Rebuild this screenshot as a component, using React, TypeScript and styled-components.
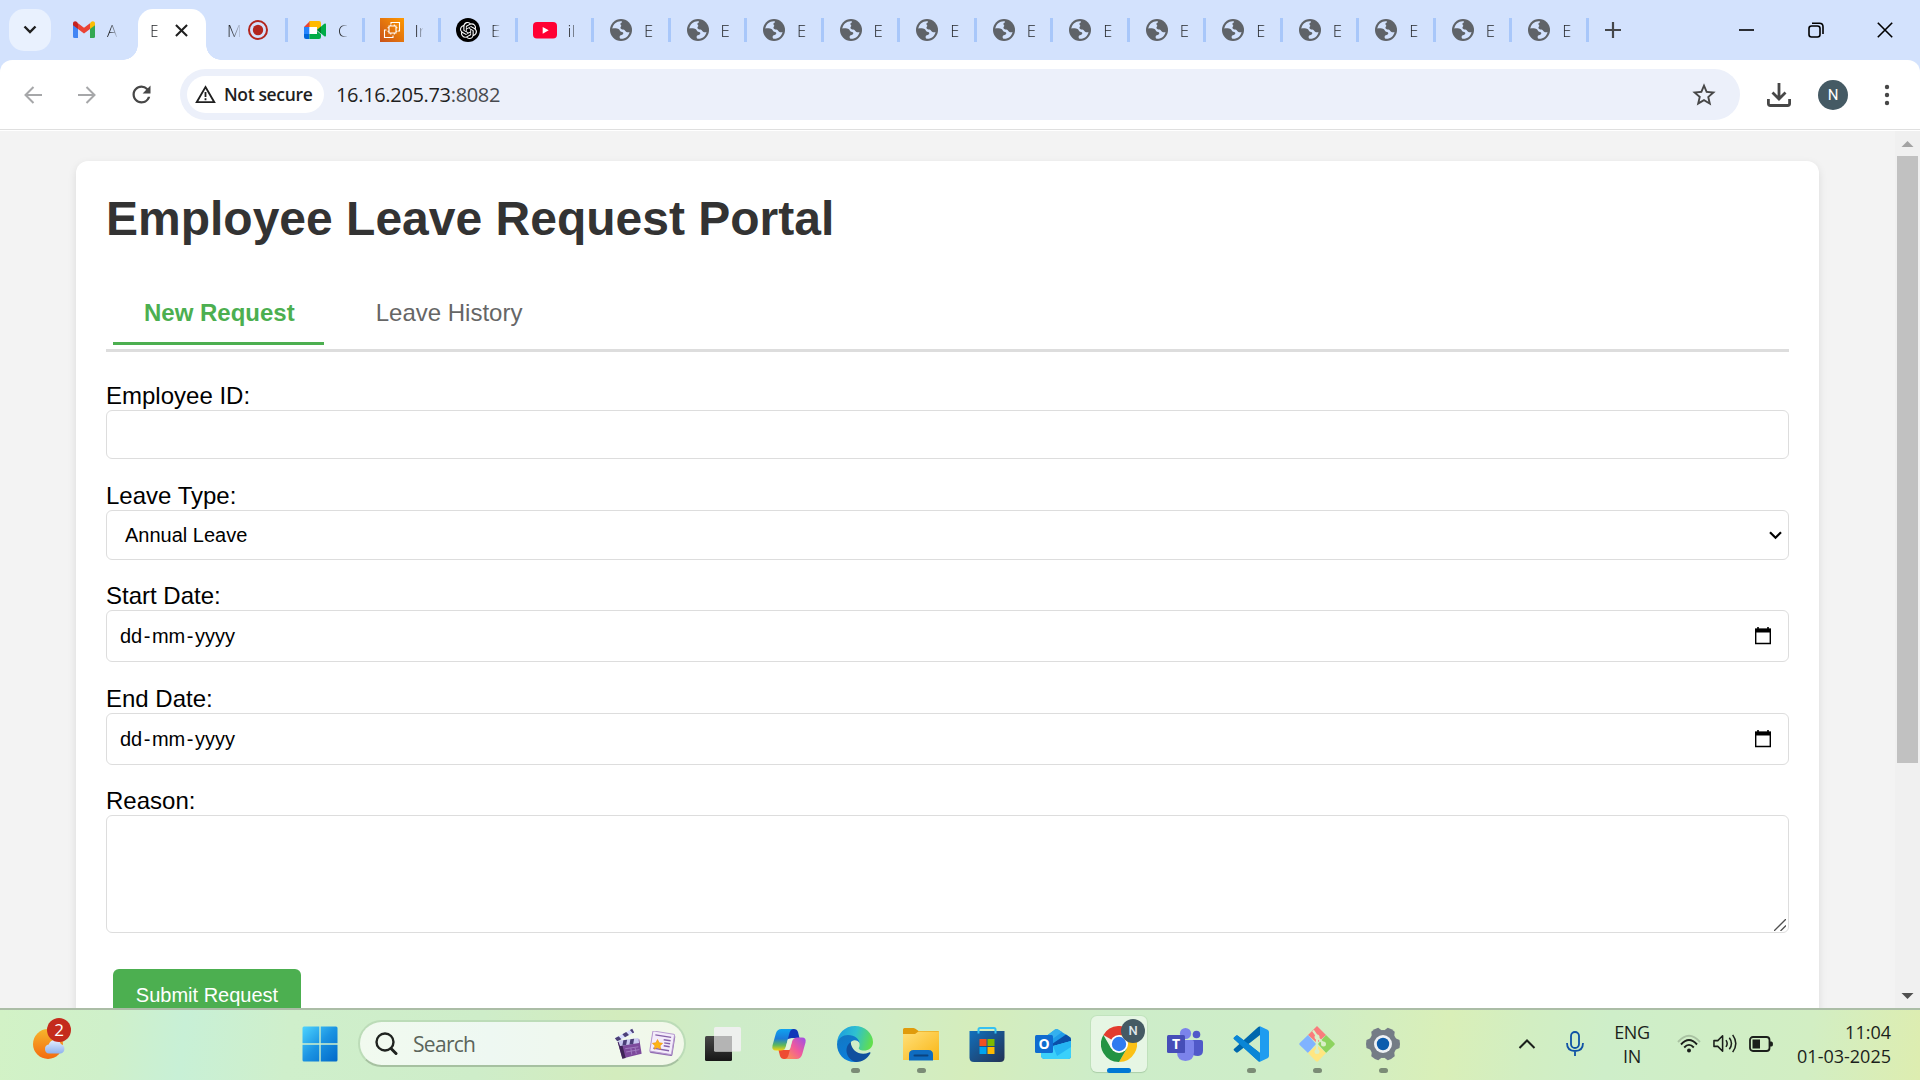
import React from "react";
import styled, { createGlobalStyle } from "styled-components";
import { SiOpenai } from "react-icons/si";
import { MdRefresh, MdStarBorder } from "react-icons/md";

const uiFont = `"Open Sans", "Noto Sans", sans-serif`;
const pageFont = `"Liberation Sans", Arial, sans-serif`;

const Global = createGlobalStyle`
  * { box-sizing: border-box; }
  html, body { margin: 0; padding: 0; overflow: hidden; }
`;

const Desktop = styled.div`
  width: 1920px;
  height: 1080px;
  display: flex;
  flex-direction: column;
  overflow: hidden;
  background: #d3e2fd;
  font-family: ${uiFont};
`;

/* ---------- tab strip ---------- */

const TabStrip = styled.div`
  height: 60px;
  flex: none;
  display: flex;
  align-items: stretch;
  padding-left: 9px;
`;

const TabSearch = styled.div`
  width: 42px;
  height: 42px;
  margin-top: 9px;
  border-radius: 15px;
  background: #e9f1fe;
  display: flex;
  align-items: center;
  justify-content: center;
`;

const Tab = styled.div<{ $w?: number; $pad?: number; $gap?: number; $sep?: boolean }>`
  width: ${(p) => p.$w ?? 76.53}px;
  flex: none;
  display: flex;
  align-items: center;
  gap: ${(p) => p.$gap ?? 11}px;
  padding-left: ${(p) => p.$pad ?? 15}px;
  background: ${(p) =>
    p.$sep === false ? "none" : "linear-gradient(#a8c7fa, #a8c7fa) right 18px / 3px 24px no-repeat"};
`;

const ActiveTab = styled.div`
  position: relative;
  width: 68px;
  flex: none;
  margin-top: 9px;
  height: 51px;
  padding: 0 18px 9px 12px;
  display: flex;
  align-items: center;
  justify-content: space-between;
  background: #fff;
  border-radius: 15px 15px 0 0;
  &::before,
  &::after {
    content: "";
    position: absolute;
    bottom: 0;
    width: 15px;
    height: 15px;
  }
  &::before {
    left: -15px;
    background: radial-gradient(circle at 0 0, transparent 14.5px, #fff 15px);
  }
  &::after {
    right: -15px;
    background: radial-gradient(circle at 100% 0, transparent 14.5px, #fff 15px);
  }
`;

const TabText = styled.span<{ $w?: number; $solid?: boolean }>`
  width: ${(p) => p.$w ?? 9}px;
  overflow: hidden;
  white-space: nowrap;
  font-size: 17px;
  line-height: 24px;
  padding-top: 2px;
  font-weight: 300;
  color: #26282b;
  mask-image: linear-gradient(to right, #000 ${(p) => (p.$solid ? "80%" : "30%")}, rgba(0, 0, 0, 0.15));
`;

const WindowButtons = styled.div`
  margin-left: auto;
  padding-right: 1px;
  display: flex;
  align-items: center;
`;

const WinButton = styled.div`
  width: 69px;
  height: 60px;
  display: flex;
  align-items: center;
  justify-content: center;
`;

const NewTab = styled.div`
  width: 48px;
  display: flex;
  align-items: center;
  justify-content: center;
`;

/* ---------- toolbar ---------- */

const Toolbar = styled.div`
  height: 71px;
  flex: none;
  display: flex;
  align-items: center;
  padding: 0 0 2px 6px;
  background: linear-gradient(#dfdfdf, #dfdfdf) left 69px / 100% 1px no-repeat, #fff;
  border-radius: 12px 12px 0 0;
`;

const NavButton = styled.div<{ $w?: number }>`
  width: ${(p) => p.$w ?? 54}px;
  flex: none;
  display: flex;
  align-items: center;
  justify-content: center;
`;

const Omnibox = styled.div`
  width: 1560px;
  height: 51px;
  margin-left: 12px;
  flex: none;
  border-radius: 26px;
  background: #ecf0fa;
  display: flex;
  align-items: center;
  padding: 0 22px 0 7px;
`;

const SecurityChip = styled.div`
  width: 137px;
  height: 37px;
  border-radius: 19px;
  background: #fff;
  display: flex;
  align-items: center;
  gap: 8px;
  padding: 0 0 1px 8px;
  font-size: 17.5px;
  font-weight: 600;
  letter-spacing: -0.35px;
  white-space: nowrap;
  color: #1f1f1f;
`;

const Url = styled.div`
  flex: 1;
  margin-left: 12px;
  padding-bottom: 1px;
  font-size: 20px;
  letter-spacing: -0.33px;
  color: #1f1f1f;
  span {
    color: #474a4f;
  }
`;

const Avatar = styled.div`
  width: 30px;
  height: 30px;
  border-radius: 50%;
  background: #455a64;
  color: #fff;
  font: 400 15px/30px Roboto, sans-serif;
  text-align: center;
`;

/* ---------- web page ---------- */

const Viewport = styled.div`
  height: 877px;
  flex: none;
  display: flex;
  overflow: hidden;
  background: #f3f3f3;
`;

const PageBody = styled.div`
  flex: 1;
  height: 877px;
  overflow: hidden;
  padding: 30px 76px 0;
  font-family: ${pageFont};
`;

const Card = styled.main`
  height: 1000px;
  padding: 30px;
  background: #fff;
  border-radius: 12px;
  box-shadow: 0 3px 9px rgba(0, 0, 0, 0.1);
`;

const Title = styled.h1`
  margin: 0;
  height: 54px;
  padding-top: 1px;
  font-size: 48px;
  line-height: 54px;
  font-weight: bold;
  color: #333;
  white-space: nowrap;
`;

const Tabs = styled.nav`
  display: flex;
  gap: 21px;
  height: 77px;
  margin-top: 30px;
  padding: 0 7px;
  border-bottom: 3px solid #ddd;
`;

const PageTab = styled.button<{ $active?: boolean }>`
  height: 70px;
  padding: 8px 29px 0 31px;
  border: 0;
  border-bottom: 3px solid ${(p) => (p.$active ? "#4caf50" : "transparent")};
  background: none;
  font: ${(p) => (p.$active ? "bold" : "normal")} 24px/27px ${pageFont};
  color: ${(p) => (p.$active ? "#4caf50" : "#666")};
  white-space: nowrap;
`;

const Form = styled.form`
  padding-top: 31px;
`;

const Field = styled.div<{ $after: number }>`
  display: flex;
  flex-direction: column;
  margin-bottom: ${(p) => p.$after}px;
`;

const Label = styled.label`
  font-size: 24px;
  line-height: 25px;
  height: 27px;
  color: #000;
`;

const Control = styled.div<{ $h: number; $pl?: number; $pr?: number }>`
  position: relative;
  height: ${(p) => p.$h}px;
  border: 1px solid #ddd;
  border-radius: 6px;
  background: #fff;
  display: flex;
  align-items: center;
  justify-content: space-between;
  padding: 0 ${(p) => p.$pr ?? 14}px 0 ${(p) => p.$pl ?? 13}px;
  font-size: 20px;
  color: #000;
`;

const DateParts = styled.span`
  display: flex;
  gap: 1.5px;
`;

const TextInput = styled.input`
  height: 49px;
  padding: 0 14px;
  border: 1px solid #ddd;
  border-radius: 6px;
  font: 20px ${pageFont};
`;

const Grip = styled.svg`
  position: absolute;
  right: 2px;
  bottom: 1px;
`;

const Submit = styled.button`
  display: block;
  margin: 36px 0 0 7px;
  width: 188px;
  height: 53px;
  padding: 0;
  border: 0;
  border-radius: 6px;
  background: #4caf50;
  color: #fff;
  font: 20px/23px ${pageFont};
`;

const ScrollTrack = styled.div`
  width: 25px;
  flex: none;
  display: flex;
  flex-direction: column;
  align-items: center;
  background: #f0f0f0;
`;

const ScrollArrow = styled.svg`
  width: 25px;
  height: 25px;
  flex: none;
`;

const ScrollThumb = styled.div`
  width: 21px;
  height: 607px;
  margin-bottom: auto;
  background: #c1c1c1;
`;

/* ---------- taskbar ---------- */

const Taskbar = styled.footer`
  height: 72px;
  flex: none;
  display: flex;
  align-items: stretch;
  border-top: 2px solid #abbda6;
  background: linear-gradient(
    97deg,
    #d2f2c6 0,
    #cff0ca 110px,
    #c8f0d6 185px,
    #cfefcb 290px,
    #ceedc9 480px,
    #d3ecbd 620px,
    #ceecc9 720px,
    #cfedc8 850px,
    #d5edbc 970px,
    #cdedc9 1100px,
    #ceedc8 1290px,
    #d9efb8 1440px,
    #d2eec2 1520px,
    #ceeec9 1600px,
    #d2eec3 1800px,
    #deedaf 1920px
  );
`;

const WeatherSlot = styled.div`
  position: relative;
  width: 287px;
  flex: none;
  padding: 19px 0 0 33px;
`;

const Badge = styled.span`
  position: absolute;
  left: 47px;
  top: 8px;
  width: 24px;
  height: 24px;
  border-radius: 50%;
  background: #c42b1c;
  color: #fff;
  font-size: 17px;
  line-height: 24px;
  text-align: center;
`;

const AppSlot = styled.div`
  position: relative;
  width: 66px;
  flex: none;
  padding-bottom: 2px;
  display: flex;
  align-items: center;
  justify-content: center;
`;

const AppTile = styled.div<{ $active?: boolean }>`
  position: relative;
  width: 56px;
  height: 56px;
  display: flex;
  align-items: center;
  justify-content: center;
  border-radius: 6px;
  background: ${(p) => (p.$active ? "rgba(255,255,255,.5)" : "none")};
  box-shadow: ${(p) => (p.$active ? "0 0 0 1px rgba(160,200,160,.25), 0 1px 1px rgba(90,130,90,.25)" : "none")};
`;

const RunMark = styled.i<{ $active?: boolean }>`
  position: absolute;
  bottom: -1px;
  width: ${(p) => (p.$active ? 24 : 9)}px;
  height: 5px;
  border-radius: 3px;
  background: ${(p) => (p.$active ? "#0078d4" : "#7b8c76")};
`;

const ProfileBadge = styled.span`
  position: absolute;
  right: 2px;
  top: 3px;
  width: 24px;
  height: 24px;
  border-radius: 50%;
  background: #455a64;
  color: #dfe6ea;
  font: 500 13px/24px Roboto, sans-serif;
  text-align: center;
`;

const SearchBox = styled.div`
  width: 328px;
  height: 47px;
  flex: none;
  margin: 10px 4px 0 5px;
  border: 2px solid #bcdcb8;
  border-bottom-color: #a6c1a1;
  border-radius: 24px;
  background: linear-gradient(90deg, #f1faef, #eef8f2 40%, #f1f8e9);
  display: flex;
  align-items: center;
  padding: 0 8px 0 15px;
`;

const SearchText = styled.span`
  flex: 1;
  margin-left: 15px;
  font-size: 21px;
  letter-spacing: -0.7px;
  color: #5b655b;
`;

const Highlights = styled.div`
  display: flex;
  align-items: center;
  gap: 4px;
`;

const Tray = styled.div`
  margin-left: auto;
  padding: 0 29px 3px 0;
  display: flex;
  align-items: center;
  font-size: 18px;
  line-height: 24px;
  letter-spacing: -0.35px;
  color: #1b1f1b;
`;

const TrayText = styled.div<{ $w: number; $align: string; $mr?: number; $ls?: number }>`
  width: ${(p) => p.$w}px;
  margin-right: ${(p) => p.$mr ?? 0}px;
  text-align: ${(p) => p.$align};
  letter-spacing: ${(p) => p.$ls ?? -0.35}px;
  white-space: nowrap;
`;

const TrayIcon = styled.div<{ $w: number; $mr: number }>`
  width: ${(p) => p.$w}px;
  margin-right: ${(p) => p.$mr}px;
  display: flex;
  justify-content: center;
`;

/* ---------- drawings ---------- */

const Globe = () => (
  <svg width="24" height="24" viewBox="0 0 24 24">
    <circle cx="12" cy="12" r="11" fill="#5f6368" />
    <path
      d="M12.6 3.3C8 2.8 4.2 5.8 3.3 10.6c1.8-.5 4.6-.6 6.6.7 1.2.9.9 2.5 3 2.8 1.6.3 1.9 1.5.7 2.3-1 .7-2.9.7-3 2.3-.1.9.2 1.6.9 2 4.4.5 8.2-2.3 9-6.8-1.4.9-3.3.4-4.2-1-.7-1.2-1.9-1.6-3.1-1.5-1.3 0-2.2-1.1-1.6-2.3.5-.9 1.200-1.100.4-1.800-.6-.6-.8-1.600-.2-2.200.7-.7 1.300-.6 1.300-1.200z"
      fill="#d3e2fd"
    />
  </svg>
);

const Gmail = () => (
  <svg width="24" height="24" viewBox="0 0 24 24">
    <path d="M1 20V6l5 3.8V20H2.500Q1 20 1 18.500z" fill="#4285f4" />
    <path d="M18 20V9.800L23 6v12.500q0 1.500-1.500 1.500z" fill="#34a853" />
    <path d="M18 5.200v5.900l5-3.800V5.500c0-2-2.200-2.900-3.700-1.700z" fill="#fbbc04" />
    <path d="M6 11.100V5.200l6 4.500 6-4.500v5.900l-6 4.500z" fill="#ea4335" />
    <path d="M1 5.500v1.800l5 3.800V5.200L4.700 3.800C3.200 2.600 1 3.500 1 5.500z" fill="#c5221f" />
  </svg>
);

const Meet = () => (
  <svg width="24" height="24" viewBox="0 0 24 24">
    <path d="M1 9l6-6v6z" fill="#ea4335" />
    <path d="M1 9h5.500v7H1z" fill="#2684fc" />
    <path d="M1 16h5.500v5H3q-2 0-2-2z" fill="#0066da" />
    <path d="M6.500 9H14v7H6.500z" fill="#fff" />
    <path d="M6.500 16H14v-3l4 3.500V19q0 2-2 2H6.500z" fill="#00ac47" />
    <path d="M6.500 3H16q2 0 2 2v4l-4 3V9H6.500z" fill="#ffba00" />
    <path d="M14 12l7.300-6.300Q23 5 23 6.500v11q0 1.500-1.700.7L14 12z" fill="#00ac47" />
    <path d="M14 12l4-3.500v7z" fill="#00832d" />
  </svg>
);

const Aws = () => (
  <svg width="24" height="24" viewBox="0 0 24 24">
    <defs>
      <linearGradient id="aws" x1="0" y1="1" x2="1" y2="0">
        <stop offset="0" stopColor="#c8511b" />
        <stop offset="1" stopColor="#ff9900" />
      </linearGradient>
    </defs>
    <path d="M0 0h24v24H0z" fill="url(#aws)" />
    <g fill="none" stroke="#fff" strokeWidth="1.100">
      <path d="M9 8h7v7H9z" />
      <path d="M10.800 6.500V8m3.500-1.500V8m-3.500 7v1.500m3.500-1.500v1.500M7.500 9.800H9m-1.500 3.400H9m7-3.400h1.500M16 13.200h1.500" />
      <path d="M11 6V4.500h8.500V13H18M6.500 12H4.500v7.500H13V17.500" />
    </g>
  </svg>
);

const OpenAiTile = styled.div`
  width: 24px;
  height: 24px;
  border-radius: 50%;
  background: #000;
  color: #fff;
  display: flex;
  align-items: center;
  justify-content: center;
`;

const YouTube = () => (
  <svg width="24" height="24" viewBox="0 0 24 24">
    <rect x="0" y="4" width="24" height="16.500" rx="4" fill="#ff0033" />
    <path d="M9.700 8.900l6 3.400-6 3.400z" fill="#fff" />
  </svg>
);

const Windows = () => (
  <svg width="36" height="36" viewBox="0 0 36 36">
    <defs>
      <linearGradient id="win" x1="0" y1="0" x2="36" y2="36" gradientUnits="userSpaceOnUse">
        <stop offset="0" stopColor="#4fd5ff" />
        <stop offset=".5" stopColor="#1b93e2" />
        <stop offset="1" stopColor="#0067c8" />
      </linearGradient>
    </defs>
    <path
      d="M2 .5h15.300v16.800H.500V2Q.500.500 2 .500zM18.700.500H34q1.500 0 1.500 1.500v15.300H18.700zM.500 18.700h16.800v16.800H2Q.500 35.500.500 34zM18.700 18.700h16.800V34q0 1.500-1.500 1.500H18.700z"
      fill="url(#win)"
    />
  </svg>
);

const Weather = () => (
  <svg width="34" height="32" viewBox="0 0 34 32">
    <defs>
      <linearGradient id="sun" x1="0" y1="0" x2="0" y2="1">
        <stop offset="0" stopColor="#f7b52c" />
        <stop offset="1" stopColor="#f36a10" />
      </linearGradient>
      <linearGradient id="cloud" x1="0" y1="0" x2="0" y2="1">
        <stop offset="0" stopColor="#e3efff" />
        <stop offset="1" stopColor="#8fb2ee" />
      </linearGradient>
    </defs>
    <circle cx="15" cy="15" r="15" fill="url(#sun)" />
    <path d="M16 24.500a4.500 4.500 0 01-.3-8.900 6.500 6.500 0 0112.200-.6A5 5 0 0128 24.500z" fill="url(#cloud)" />
  </svg>
);

const Clapper = () => (
  <svg width="31" height="34" viewBox="0 0 33 34">
    <path d="M5 15l23-3 2.500 15.500L10 32.500z" fill="#7d4a9c" />
    <path d="M5 15l4-.5 4.500 17.300-3.500.9z" fill="#3f2457" />
    <path d="M5.500 13.500L27 10.500l.8 5.500L7.500 19z" fill="#c9c8f0" />
    <path d="M11 13l4-.6-1 5.700-4 .6zM18.500 12l4-.6-1 5.500-4 .6z" fill="#4b3f78" />
    <path d="M2 11L20.500.800l2 4L4.500 14z" fill="#d8dcff" />
    <path d="M2 11l4-2.200L9 12l-4.500 2.200zM10 6.500L14 4.300l3 3.200-4.200 2.200zM18 2.200L20.500.8l2 4-1.500.7z" fill="#4b3f78" />
    <path d="M13 22l14-2M14 25.500l14-2.500M19 21.500l1 7M23.500 21l1.300 6.500" stroke="#a582c4" strokeWidth=".9" />
  </svg>
);

const News = () => (
  <svg width="28" height="26" viewBox="0 0 28 26">
    <g transform="rotate(9 14 13)">
      <rect x="3" y="2.500" width="23" height="21" rx="1.500" fill="#8f6bb0" />
      <rect x="3" y="1.500" width="22" height="20.500" rx="1" fill="#f3ecfa" stroke="#b79ad0" />
      <path d="M6 5h16M15 8.500h7M16 11.500h6M16 14.500h6M6 18.500h16" stroke="#8561a8" strokeWidth="1.400" />
    </g>
    <path d="M9.500 8.500l1.600 3.200 3.500.6-2.500 2.500.6 3.500-3.200-1.700-3.200 1.700.6-3.500-2.500-2.500 3.500-.6z" fill="#fdb515" stroke="#ef8e12" strokeWidth=".6" />
  </svg>
);

const TaskView = () => (
  <svg width="36" height="36" viewBox="0 0 36 36">
    <defs>
      <linearGradient id="tvd" x1="0" y1="0" x2="0" y2="1">
        <stop offset="0" stopColor="#474747" />
        <stop offset="1" stopColor="#171717" />
      </linearGradient>
    </defs>
    <rect x="0" y="10" width="27" height="25" rx="1.500" fill="url(#tvd)" />
    <rect x="9" y="1" width="27" height="24.500" rx="1.500" fill="#eef0ee" />
    <path d="M9 10h18v15.500H10.500Q9 25.500 9 24z" fill="#b4b4b4" />
  </svg>
);

const Copilot = () => (
  <svg width="36" height="36" viewBox="0 0 36 36">
    <defs>
      <linearGradient id="cpa" x1="0" y1="0" x2="0" y2="1">
        <stop offset="0" stopColor="#0fa3f0" />
        <stop offset=".45" stopColor="#1b7bd8" />
        <stop offset=".75" stopColor="#5cb85c" />
        <stop offset="1" stopColor="#f4d411" />
      </linearGradient>
      <linearGradient id="cpb" x1="1" y1="0" x2="0" y2="1">
        <stop offset="0" stopColor="#9b4fe8" />
        <stop offset=".5" stopColor="#f05a9c" />
        <stop offset="1" stopColor="#ff9a4a" />
      </linearGradient>
    </defs>
    <path d="M10 3h13q3 0 4 3l1.500 6h-8l-7 2z" fill="#1238b8" />
    <path d="M26 33H13q-3 0-4-3l-1.500-6h8l7-2z" fill="#ee4d33" />
    <path d="M10.500 3H22q-2.500.5-3.300 3.300L15 20q-1 4.500-5.500 4.500H5q-4.500 0-3.500-5L4.700 8Q6 3 10.500 3z" fill="url(#cpa)" />
    <path d="M25.500 33H14q2.500-.5 3.300-3.300L21 16q1-4.500 5.500-4.500H31q4.500 0 3.500 5L31.300 28Q30 33 25.500 33z" fill="url(#cpb)" />
    <path d="M17 13h4.500l-3 11h-4.500z" fill="#e5f5dc" />
  </svg>
);

const Edge = () => (
  <svg width="36" height="36" viewBox="0 0 36 36">
    <defs>
      <linearGradient id="eda" x1="0" y1=".3" x2="1" y2=".5">
        <stop offset="0" stopColor="#1b9de0" />
        <stop offset=".5" stopColor="#2fc0d0" />
        <stop offset="1" stopColor="#62df4c" />
      </linearGradient>
      <linearGradient id="edb" x1="0" y1="0" x2=".4" y2="1">
        <stop offset="0" stopColor="#1377c2" />
        <stop offset="1" stopColor="#0b7fdc" />
      </linearGradient>
    </defs>
    <path d="M0 18C0 7.500 8 0 18 0s18 7.500 18 16c0 6-4.500 8.500-9 8.500-4 0-6-1.500-5-3 1.500-2.500.5-8-5-8.500C9 9 2 13 0 18z" fill="url(#eda)" />
    <path d="M0 18C1 12 6 9 11 9c7 0 11 4 11.500 8-1-3-7.500-4.500-9 0C11 25 20 31.500 31 28c-4 6-9 8-13 8C7 36 0 28 0 18z" fill="url(#edb)" />
    <path d="M13.700 16C6 22 9.500 33.500 19 36c6 0 11.500-3.500 14.300-8.500.5-1-.3-1.500-1.300-1C24 30 14.500 26 13.700 16z" fill="#104f9e" />
  </svg>
);

const Explorer = () => (
  <svg width="36" height="36" viewBox="0 0 36 36">
    <defs>
      <linearGradient id="fx" x1="0" y1="0" x2="1" y2="1">
        <stop offset="0" stopColor="#ffe07a" />
        <stop offset="1" stopColor="#f9b514" />
      </linearGradient>
    </defs>
    <path d="M0 3.500Q0 2 1.500 2h9q1.500 0 3 1.500L15.500 5H35q1 0 1 1v6H0z" fill="#e09b0c" />
    <path d="M0 8h12l3.500-2.500H36V34H0z" fill="url(#fx)" />
    <path d="M6 34.500v-6Q6 24 10.500 24h15q4.500 0 4.500 4.500v6z" fill="#0f6cc0" />
    <rect x="10.500" y="28.500" width="15" height="2" rx="1" fill="#0b437f" />
  </svg>
);

const Store = () => (
  <svg width="36" height="36" viewBox="0 0 36 36">
    <defs>
      <linearGradient id="st" x1="0" y1="0" x2="1" y2="1">
        <stop offset="0" stopColor="#1170bd" />
        <stop offset="1" stopColor="#243254" />
      </linearGradient>
    </defs>
    <path d="M.500 5h35v26.500q0 4.500-4.500 4.500H5Q.500 36 .500 31.500z" fill="url(#st)" />
    <path d="M9.500 7.500V3.500q0-1.500 1.500-1.500h14q1.500 0 1.500 1.500v4" fill="none" stroke="#35c1f1" strokeWidth="2" />
    <path d="M10.500 13h7v7h-7z" fill="#f25022" />
    <path d="M18.500 13h7v7h-7z" fill="#7fba00" />
    <path d="M10.500 21h7v7h-7z" fill="#00a4ef" />
    <path d="M18.500 21h7v7h-7z" fill="#ffb900" />
  </svg>
);

const IconLetter = styled.text`
  font-family: ${uiFont};
  font-weight: 700;
  fill: #fff;
  text-anchor: middle;
`;

const Outlook = () => (
  <svg width="36" height="36" viewBox="0 0 36 36">
    <path d="M6 14L20 3.500q1.500-1 3 0L34 10.500q2 1.200 2 3.500v16q0 3-3 3H10q-4 0-4-4z" fill="#1f9ce8" />
    <path d="M10 11L20 3.500q1.500-1 3 0l4 2.600L12 17z" fill="#34b0ee" />
    <path d="M17 18L31 8.500l4 2.700q1 1 1 2.300v2L21 26z" fill="#0a4fa8" />
    <path d="M6 27l12-7 18-5v15q0 3-3 3H10q-4 0-4-4z" fill="#3bd0fa" />
    <path d="M18 20l18-5v6l-14 9z" fill="#25b4f3" />
    <rect x="0" y="9" width="18" height="18" rx="1.500" fill="#0f6cd0" />
    <IconLetter x="9" y="23" fontSize="14">O</IconLetter>
  </svg>
);

const Chrome = () => (
  <svg width="36" height="36" viewBox="0 0 36 36">
    <path d="M18 18L2.400 9A18 18 0 0133.600 9H18z" fill="#e33b2e" />
    <path d="M18 9h15.600A18 18 0 0118 36l7.800-13.500z" fill="#fbc116" />
    <path d="M10.200 22.500L2.400 9A18 18 0 0018 36l7.800-13.500z" fill="#229342" />
    <circle cx="18" cy="18" r="9" fill="#fff" />
    <circle cx="18" cy="18" r="7.200" fill="#2f7bf0" />
  </svg>
);

const Teams = () => (
  <svg width="36" height="36" viewBox="0 0 36 36">
    <circle cx="29.500" cy="8.500" r="3.800" fill="#5059c9" />
    <path d="M24 14h10q2 0 2 2v8.500q0 5-5 5.500-3 0-5-1z" fill="#5059c9" />
    <circle cx="18.500" cy="7.500" r="5.600" fill="#7b83eb" />
    <path d="M10 14h15q2 0 2 2v10q0 8.500-8.500 9Q10 34.500 10 26z" fill="#7b83eb" />
    <path d="M10 14h8v13H10z" fill="#5a61c4" />
    <rect x="0" y="9" width="18" height="18" rx="1.500" fill="#464eb8" />
    <IconLetter x="9" y="23" fontSize="14">T</IconLetter>
  </svg>
);

const VsCode = () => (
  <svg width="36" height="36" viewBox="0 0 36 36">
    <path d="M1 11.500l2-1.800q.9-.7 1.900 0L27 27v8.500q-1 .3-1.800-.5L.900 13Q.200 12.200 1 11.500z" fill="#007acc" />
    <path d="M1 24.500l2 1.800q.9.700 1.900 0L27 9V.500q-1-.3-1.800.5L.900 23q-.7.800.1 1.500z" fill="#0068ad" />
    <path d="M1 11.500l2-1.800q.9-.7 1.900 0L27 27v8.500q-1 .3-1.800-.5L.900 13Q.200 12.200 1 11.500z" fill="#0a86d6" />
    <path d="M27 .300l7.500 3.500Q36 4.500 36 6v24q0 1.500-1.500 2.200L27 35.700z" fill="#1f9cf0" />
  </svg>
);

const GitApp = () => (
  <svg width="36" height="36" viewBox="0 0 36 36">
    <path d="M18 0l9 9-9 8-9-8z" fill="#f97c7c" />
    <path d="M9 9l8 9-8 9-8.300-8q-.9-1 0-2z" fill="#80b3ff" />
    <path d="M27 9l8.300 8q.9 1 0 2L27 27l-8-9z" fill="#8dd35f" />
    <path d="M18 19l9 8-8 8.300q-1 .9-2 0L9 27z" fill="#ffe680" />
    <path d="M14 4.500l4 5.500v16M18 11l6.500 6.500" stroke="#d9efc8" strokeWidth="2.200" fill="none" />
    <circle cx="18" cy="11" r="2.500" fill="#d9efc8" />
    <circle cx="24.500" cy="18" r="2.500" fill="#d9efc8" />
    <circle cx="18" cy="25.500" r="2.500" fill="#d9efc8" />
  </svg>
);

const Settings = () => (
  <svg width="36" height="36" viewBox="0 0 36 36">
    <g fill="#747c86">
      <circle cx="18" cy="18" r="14" />
      {[0, 60, 120].map((a) => (
        <path key={a} d="M12.500 5L14 1.500q4-1 8 0L23.500 5v26L22 34.500q-4 1-8 0L12.500 31z" transform={`rotate(${a + 30} 18 18)`} />
      ))}
    </g>
    <circle cx="18" cy="18" r="9" fill="#eef1f4" />
    <circle cx="18" cy="18" r="6.200" fill="#0b5cad" />
  </svg>
);

const Calendar = () => (
  <svg width="16" height="18" viewBox="0 0 16 18">
    <path d="M3 0v3M13 0v3" stroke="#000" strokeWidth="1.600" />
    <path d="M.700 2.500h14.600v14H.700z" fill="none" stroke="#000" strokeWidth="1.400" />
    <path d="M0 1.500h16v4H0z" fill="#000" />
  </svg>
);

const apps: { icon: React.ReactNode; run?: boolean; active?: boolean }[] = [
  { icon: <TaskView /> },
  { icon: <Copilot /> },
  { icon: <Edge />, run: true },
  { icon: <Explorer />, run: true },
  { icon: <Store /> },
  { icon: <Outlook /> },
  { icon: <Chrome />, run: true, active: true },
  { icon: <Teams /> },
  { icon: <VsCode />, run: true },
  { icon: <GitApp />, run: true },
  { icon: <Settings />, run: true },
];

const DateField = () => (
  <Control $h={52} $pr={17}>
    <DateParts>
      <span>dd</span>
      <span>-</span>
      <span>mm</span>
      <span>-</span>
      <span>yyyy</span>
    </DateParts>
    <Calendar />
  </Control>
);

export default function App() {
  return (
    <Desktop>
      <Global />
      <TabStrip>
        <TabSearch>
          <svg width="14" height="10" viewBox="0 0 14 10">
            <path d="M1.500 1.500L7 7l5.500-5.500" fill="none" stroke="#1f1f1f" strokeWidth="2.400" />
          </svg>
        </TabSearch>
        <Tab $w={87} $pad={21} $sep={false}>
          <Gmail />
          <TabText $w={10}>A</TabText>
        </Tab>
        <ActiveTab>
          <TabText $w={8} $solid>E</TabText>
          <svg width="13" height="13" viewBox="0 0 14 14">
            <path d="M1 1l12 12M13 1L1 13" stroke="#1f1f1f" strokeWidth="2.200" />
          </svg>
        </ActiveTab>
        <Tab $w={82} $pad={21} $gap={8}>
          <TabText $w={13}>M</TabText>
          <svg width="20" height="20" viewBox="0 0 20 20">
            <circle cx="10" cy="10" r="9" fill="none" stroke="#b3261e" strokeWidth="2" />
            <circle cx="10" cy="10" r="5.200" fill="#b3261e" />
          </svg>
        </Tab>
        <Tab><Meet /><TabText>C</TabText></Tab>
        <Tab><Aws /><TabText $w={8}>In</TabText></Tab>
        <Tab>
          <OpenAiTile><SiOpenai size={17} /></OpenAiTile>
          <TabText>E</TabText>
        </Tab>
        <Tab><YouTube /><TabText>il</TabText></Tab>
        {Array.from({ length: 13 }, (_, i) => (
          <Tab key={i}><Globe /><TabText $solid>E</TabText></Tab>
        ))}
        <NewTab>
          <svg width="16" height="16" viewBox="0 0 16 16">
            <path d="M8 0v16M0 8h16" stroke="#45474a" strokeWidth="2.200" />
          </svg>
        </NewTab>
        <WindowButtons>
          <WinButton>
            <svg width="15" height="15" viewBox="0 0 15 15"><path d="M0 7h15" stroke="#000" strokeWidth="1.600" /></svg>
          </WinButton>
          <WinButton>
            <svg width="16" height="16" viewBox="0 0 16 16" fill="none" stroke="#000" strokeWidth="1.600">
              <rect x="1" y="4" width="11" height="11" rx="2.500" />
              <path d="M4 1.300h7.500q3.500 0 3.500 3.500V12" />
            </svg>
          </WinButton>
          <WinButton>
            <svg width="16" height="16" viewBox="0 0 16 16"><path d="M.800.800l14.400 14.400M15.200.800L.800 15.200" stroke="#000" strokeWidth="1.600" /></svg>
          </WinButton>
        </WindowButtons>
      </TabStrip>

      <Toolbar>
        <NavButton>
          <svg width="18" height="18" viewBox="0 0 18 18" fill="none" stroke="#a6a7a9" strokeWidth="2"><path d="M18 9H1.500M9.500 1L1.500 9l8 8" /></svg>
        </NavButton>
        <NavButton>
          <svg width="18" height="18" viewBox="0 0 18 18" fill="none" stroke="#a6a7a9" strokeWidth="2"><path d="M0 9h16.500M8.500 1l8 8-8 8" /></svg>
        </NavButton>
        <NavButton><MdRefresh size={27} color="#474747" /></NavButton>
        <Omnibox>
          <SecurityChip>
            <svg width="21" height="19" viewBox="0 0 21 19">
              <path d="M10.500 2L19.300 17.200H1.700z" fill="none" stroke="#1f1f1f" strokeWidth="1.800" />
              <path d="M10.500 7v5M10.500 13.300v2" stroke="#1f1f1f" strokeWidth="1.800" />
            </svg>
            Not secure
          </SecurityChip>
          <Url>16.16.205.73<span>:8082</span></Url>
          <MdStarBorder size={28} color="#474747" />
        </Omnibox>
        <NavButton $w={78}>
          <svg width="24" height="24" viewBox="0 0 24 24" fill="none" stroke="#474747" strokeWidth="2.800">
            <path d="M12 0v15M5.500 9.500L12 16l6.500-6.500M1.400 16v4.500q0 2 2 2h17.200q2 0 2-2V16" />
          </svg>
        </NavButton>
        <NavButton $w={30}><Avatar>N</Avatar></NavButton>
        <NavButton $w={78}>
          <svg width="6" height="24" viewBox="0 0 6 24" fill="#474747">
            <circle cx="3" cy="4" r="2.200" /><circle cx="3" cy="12" r="2.200" /><circle cx="3" cy="20" r="2.200" />
          </svg>
        </NavButton>
      </Toolbar>

      <Viewport>
        <PageBody>
          <Card>
            <Title>Employee Leave Request Portal</Title>
            <Tabs>
              <PageTab $active>New Request</PageTab>
              <PageTab>Leave History</PageTab>
            </Tabs>
            <Form>
              <Field $after={24}>
                <Label>Employee ID:</Label>
                <TextInput />
              </Field>
              <Field $after={23}>
                <Label>Leave Type:</Label>
                <Control $h={50} $pl={18} $pr={6}>
                  Annual Leave
                  <svg width="13" height="9" viewBox="0 0 13 9"><path d="M1 1.300l5.500 5.500L12 1.300" fill="none" stroke="#000" strokeWidth="2.200" /></svg>
                </Control>
              </Field>
              <Field $after={24}>
                <Label>Start Date:</Label>
                <DateField />
              </Field>
              <Field $after={23}>
                <Label>End Date:</Label>
                <DateField />
              </Field>
              <Field $after={0}>
                <Label>Reason:</Label>
                <Control $h={118}>
                  <Grip width="12" height="12" viewBox="0 0 12 12">
                    <path d="M0 12L12 0M6.500 12L12 6.500" stroke="#505050" strokeWidth="1.300" />
                  </Grip>
                </Control>
              </Field>
              <Submit type="button">Submit Request</Submit>
            </Form>
          </Card>
        </PageBody>
        <ScrollTrack>
          <ScrollArrow viewBox="0 0 25 25"><path d="M6.500 16L12.500 10l6 6z" fill="#a3a3a3" /></ScrollArrow>
          <ScrollThumb />
          <ScrollArrow viewBox="0 0 25 25"><path d="M6.500 10L12.500 16l6-6z" fill="#505050" /></ScrollArrow>
        </ScrollTrack>
      </Viewport>

      <Taskbar>
        <WeatherSlot>
          <Weather />
          <Badge>2</Badge>
        </WeatherSlot>
        <AppSlot><Windows /></AppSlot>
        <SearchBox>
          <svg width="23" height="24" viewBox="0 0 23 24" fill="none" stroke="#1f231f">
            <circle cx="10" cy="10" r="8.500" strokeWidth="2.400" />
            <path d="M16 16.500l5 5" strokeWidth="3" strokeLinecap="round" />
          </svg>
          <SearchText>Search</SearchText>
          <Highlights>
            <Clapper />
            <News />
          </Highlights>
        </SearchBox>
        {apps.map((a, i) => (
          <AppSlot key={i}>
            <AppTile $active={a.active}>
              {a.icon}
              {a.active && <ProfileBadge>N</ProfileBadge>}
              {a.run && <RunMark $active={a.active} />}
            </AppTile>
          </AppSlot>
        ))}
        <Tray>
          <TrayIcon $w={18} $mr={29}>
            <svg width="18" height="12" viewBox="0 0 18 12"><path d="M1.500 10L9 2.500l7.500 7.500" fill="none" stroke="#1b1f1b" strokeWidth="2" /></svg>
          </TrayIcon>
          <TrayIcon $w={20} $mr={27}>
            <svg width="18" height="26" viewBox="0 0 18 26" fill="none" stroke="#0f52a5" strokeWidth="1.800">
              <rect x="5" y="1" width="8" height="16" rx="4" />
              <path d="M1 12q0 8 8 8t8-8M9 20v5" />
            </svg>
          </TrayIcon>
          <TrayText $w={40} $align="center" $mr={25}>ENG<br />IN</TrayText>
          <TrayIcon $w={24} $mr={12}>
            <svg width="24" height="20" viewBox="0 0 24 20" fill="none" stroke="#1b1f1b" strokeWidth="1.900">
              <path d="M1 8Q12-4.500 23 8" stroke="#a9c2a2" />
              <path d="M4 10.500q8-9 16 0M7.200 13.500q4.800-5.200 9.600 0" />
              <circle cx="12" cy="16.500" r="2" fill="#1b1f1b" stroke="none" />
            </svg>
          </TrayIcon>
          <TrayIcon $w={24} $mr={12}>
            <svg width="25" height="21" viewBox="0 0 25 21" fill="none" stroke="#1b1f1b" strokeWidth="1.600">
              <path d="M1 7.500h4l5-5v16l-5-5H1z" strokeLinejoin="round" />
              <path d="M13.500 7q2.500 3.500 0 7M17 4.500q4.500 6 0 12M20.500 1.500q6.500 9 0 18" />
            </svg>
          </TrayIcon>
          <TrayIcon $w={24} $mr={18}>
            <svg width="24" height="16" viewBox="0 0 24 16">
              <rect x="1" y="1" width="19.500" height="14" rx="3" fill="none" stroke="#1b1f1b" strokeWidth="1.800" />
              <path d="M3.500 3.500h7.500v9H3.500zM21 5.500h1.500q1.500 0 1.500 2.500t-1.500 2.500H21z" fill="#1b1f1b" />
            </svg>
          </TrayIcon>
          <TrayText $w={100} $align="right" $ls={0}>11:04<br />01-03-2025</TrayText>
        </Tray>
      </Taskbar>
    </Desktop>
  );
}
